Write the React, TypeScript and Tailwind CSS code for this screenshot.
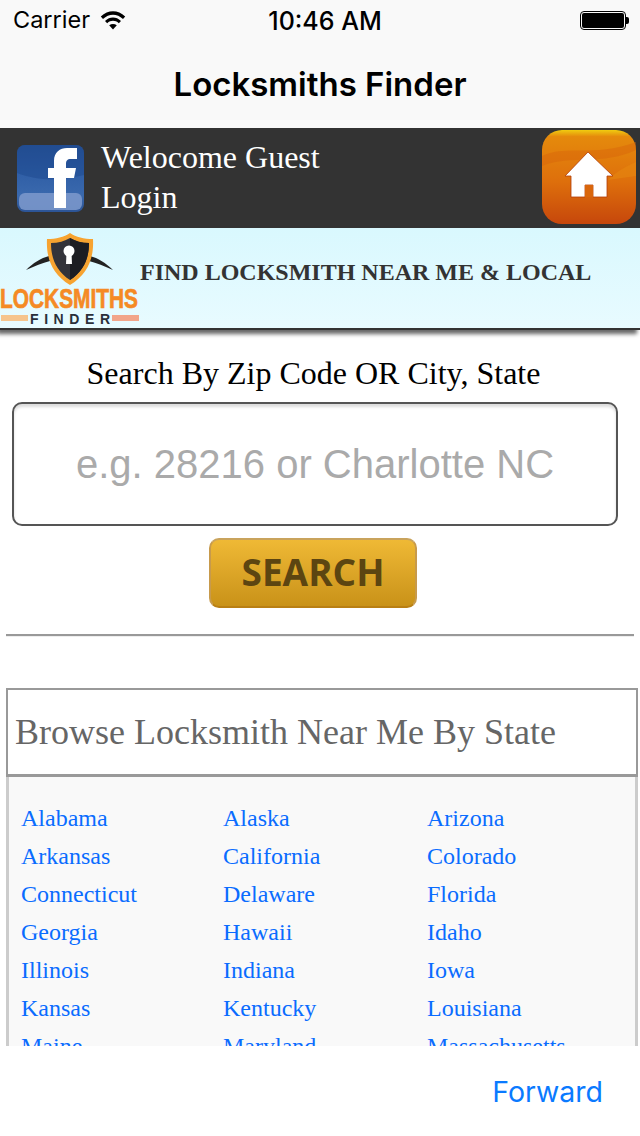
import React from 'react';

const STATES = [
  ['Alabama', 'Alaska', 'Arizona'],
  ['Arkansas', 'California', 'Colorado'],
  ['Connecticut', 'Delaware', 'Florida'],
  ['Georgia', 'Hawaii', 'Idaho'],
  ['Illinois', 'Indiana', 'Iowa'],
  ['Kansas', 'Kentucky', 'Louisiana'],
  ['Maine', 'Maryland', 'Massachusetts'],
];

const WifiIcon = () => (
  <svg width="26" height="20" viewBox="0 0 26 20">
    <path d="M0.8 6.6 C8 -0.6 18 -0.6 25.2 6.6 L23 8.9 C17 3.2 9 3.2 3 8.9 Z" fill="#000" />
    <path d="M5 10.9 C10 6.4 16 6.4 21 10.9 L18.8 13.2 C15.2 10 10.8 10 7.2 13.2 Z" fill="#000" />
    <path d="M9.2 15.3 C11.6 13.4 14.4 13.4 16.8 15.3 L13 19.4 Z" fill="#000" />
  </svg>
);

const Battery = () => (
  <div className="flex items-center">
    <div className="w-[46px] h-[19px] rounded-[4px] border border-black p-[1px]">
      <div className="w-full h-full bg-black rounded-[2px]" />
    </div>
    <div className="w-[3px] h-[7px] bg-black rounded-r-[2px]" />
  </div>
);

const FacebookIcon = () => (
  <svg width="67" height="67" viewBox="0 0 67 67">
    <defs>
      <linearGradient id="fbBg" x1="0" y1="0" x2="0" y2="1">
        <stop offset="0" stopColor="#254f93" />
        <stop offset="0.4" stopColor="#2f5ea6" />
        <stop offset="0.75" stopColor="#3a69ad" />
        <stop offset="1" stopColor="#2c5496" />
      </linearGradient>
    </defs>
    <rect width="67" height="67" rx="8" fill="url(#fbBg)" />
    <path d="M0 8 a8 8 0 0 1 8 -8 h51 a8 8 0 0 1 8 8 v22 C45 36 20 36 0 28 Z" fill="#1f4a8f" opacity="0.55" />
    <rect x="2" y="48" width="63" height="17" rx="6" fill="#7a97cb" opacity="0.9" />
    <path d="M37 63 V33 H31 V23 H37 V16 C37 7 43 3 50 3 H60 V14 H54 C50 14 49 16 49 19 V23 H59 L57 33 H49 V63 Z" fill="#fff" />
  </svg>
);

const HomeIcon = () => (
  <svg width="94" height="94" viewBox="0 0 94 94" className="mb-[2px]">
    <defs>
      <linearGradient id="homeBg" x1="0" y1="0" x2="0" y2="1">
        <stop offset="0" stopColor="#f0cc10" />
        <stop offset="0.07" stopColor="#e58a0c" />
        <stop offset="0.55" stopColor="#de6f0c" />
        <stop offset="1" stopColor="#c6470c" />
      </linearGradient>
    </defs>
    <rect width="94" height="94" rx="20" fill="url(#homeBg)" />
    <path d="M0 26 C25 14 50 28 94 12 V20 C60 36 30 24 0 36 Z" fill="#d6640b" opacity="0.45" />
    <path d="M94 32 C80 38 72 44 66 50 L94 46 Z" fill="#e88a10" opacity="0.5" />
    <path d="M46 22 L71 46 H65 V67 H51 V55 H43 V67 H29 V46 H23 Z" fill="#fff" stroke="#b33c08" strokeWidth="0.8" />
    <rect x="43" y="55" width="8" height="12" fill="#d9660c" />
  </svg>
);

const Logo = () => (
  <svg width="139" height="100" viewBox="0 0 139 100" className="shrink-0">
    <path d="M26 42 C33 35 41 30 49 28 L50 33 C42 35 35 38 26 42 Z" fill="#222" />
    <path d="M113 42 C106 35 98 30 90 28 L89 33 C97 35 104 38 113 42 Z" fill="#222" />
    <path d="M70 5 C76 9 84 11 93 11 C94 30 88 46 70 57 C52 46 46 30 47 11 C56 11 64 9 70 5 Z" fill="#f7a330" />
    <path d="M70 10 C75 13 82 15 89 15 C89 30 84 43 70 52 C56 43 51 30 51 15 C58 15 65 13 70 10 Z" fill="#33333a" />
    <path d="M70 10 C75 13 82 15 89 15 C89 30 84 43 70 52 Z" fill="#1d1d22" />
    <circle cx="69" cy="23" r="5.500" fill="#fff" />
    <path d="M66.500 25 H71.500 L72 36 H66 Z" fill="#fff" />
    <text x="0" y="80" textLength="138" lengthAdjust="spacingAndGlyphs" fontFamily="Liberation Sans, sans-serif" fontWeight="700" fontSize="27" fill="#f58a24" stroke="#f58a24" strokeWidth="0.7">LOCKSMITHS</text>
    <rect x="1" y="87" width="27" height="6" fill="#f6c48d" />
    <rect x="112" y="87" width="27" height="6" fill="#f2a58a" />
    <text x="30" y="96" textLength="80" fontFamily="Liberation Sans, sans-serif" fontWeight="700" fontSize="14" fill="#2a2f3a">FINDER</text>
  </svg>
);

export default function App() {
  return (
    <div className="w-[640px] h-[1136px] flex flex-col overflow-hidden bg-white font-['Liberation_Serif',serif]">
      <header className="h-[128px] shrink-0 bg-[#f9f9f9] flex flex-col font-['Inter',sans-serif] text-black">
        <div className="h-[40px] relative flex items-center justify-between pl-[13px] pr-[11px]">
          <div className="flex items-center gap-[10px] text-[23.5px] leading-none">
            Carrier
            <WifiIcon />
          </div>
          <div className="absolute left-[10px] right-0 top-[9px] text-center text-[25px] font-medium leading-none">10:46 AM</div>
          <Battery />
        </div>
        <div className="flex-1 flex items-center justify-center pt-[2px] text-[33px] font-semibold">
          Locksmiths Finder
        </div>
      </header>

      <div className="h-[100px] shrink-0 bg-[#333] flex items-center justify-between pl-[17px] pr-[4px] text-white text-[32px] leading-[40px]">
        <div className="flex items-center gap-[17px]">
          <FacebookIcon />
          <div className="mt-[-2px]">
            <div>Welocome Guest</div>
            <div>Login</div>
          </div>
        </div>
        <HomeIcon />
      </div>

      <div className="h-[102px] shrink-0 relative z-10 flex items-center gap-[1px] border-b-2 border-[#333] bg-gradient-to-b from-[#d9f8fe] to-[#e8fbff] shadow-[-3px_4px_4px_#666]">
        <Logo />
        <h1 className="font-bold text-[24px] text-[#333] leading-none mt-[-12px]">FIND LOCKSMITH NEAR ME &amp; LOCAL</h1>
      </div>

      <main className="flex-1 min-h-0 overflow-hidden px-[6px]">
        <div className="text-center text-[32px] leading-[37px] text-black mt-[25px] pr-[13px]">
          Search By Zip Code OR City, State
        </div>
        <div className="mt-[10px] ml-[6px] w-[606px] h-[124px] rounded-[10px] border-2 border-[#555] bg-white shadow-[inset_0_3px_3px_#ddd] flex items-center justify-center font-['Liberation_Sans',sans-serif] text-[40px] text-[#aaa]">
          e.g. 28216 or Charlotte NC
        </div>
        <div className="mt-[12px] flex justify-center pr-[14px]">
          <button className="w-[208px] h-[70px] pb-[4px] rounded-[10px] border-2 border-t-[#c9a35c] border-x-[#c79a4c] border-b-[#b97f13] bg-gradient-to-b from-[#efb935] to-[#c99218] font-['Open_Sans',sans-serif] font-bold text-[37px] leading-none text-[#5c4511]">
            SEARCH
          </button>
        </div>
        <hr className="mt-[26px] h-[3px] border-0 border-t-2 border-[#999] bg-[#eee]" />

        <div className="mt-[51px] w-[632px] h-[89px] border-2 border-b-[3px] border-[#999] flex items-center pl-[7px] text-[36px] text-[#666]">
          Browse Locksmith Near Me By State
        </div>
        <div className="w-[632px] bg-[#f9f9f9] border-x-[3px] border-[#ccc] pt-[22px] pl-[12px]">
          {STATES.map(row => (
            <div key={row[0]} className="grid grid-cols-[202px_204px_1fr] h-[38px] text-[24px] leading-[38px] text-[#0a6cff]">
              {row.map(name => (
                <a key={name}>{name}</a>
              ))}
            </div>
          ))}
        </div>
      </main>

      <footer className="h-[90px] shrink-0 bg-white flex items-center justify-end pt-[2px] pr-[37px] font-['Inter',sans-serif] text-[28.5px] text-[#0a7aff]">
        Forward
      </footer>
    </div>
  );
}
